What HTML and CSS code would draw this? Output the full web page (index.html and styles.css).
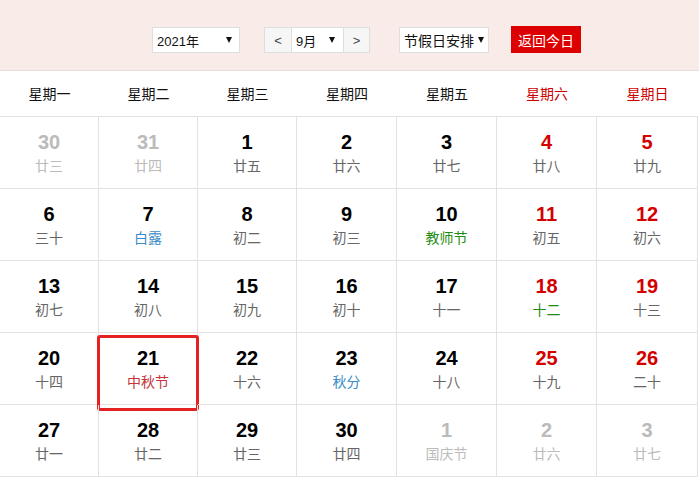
FILE: index.html
```html
<!DOCTYPE html>
<html lang="zh-CN">
<head>
<meta charset="utf-8">
<title>万年历</title>
<link rel="stylesheet" href="styles.css">
</head>
<body>
<div class="toolbar">
  <div class="sel sel-year"><span>2021年</span><i class="tri"></i></div>
  <div class="month-group">
    <div class="nav-btn">&lt;</div>
    <div class="sel sel-month"><span>9月</span><i class="tri"></i></div>
    <div class="nav-btn">&gt;</div>
  </div>
  <div class="sel sel-holiday"><span>节假日安排</span><i class="tri"></i></div>
  <div class="today-btn">返回今日</div>
</div>
<div class="weekhead">
  <div>星期一</div><div>星期二</div><div>星期三</div><div>星期四</div><div>星期五</div><div class="we">星期六</div><div class="we">星期日</div>
</div>
<div class="grid">
  <div class="cell out"><b>30</b><span>廿三</span></div>
  <div class="cell out"><b>31</b><span>廿四</span></div>
  <div class="cell"><b>1</b><span>廿五</span></div>
  <div class="cell"><b>2</b><span>廿六</span></div>
  <div class="cell"><b>3</b><span>廿七</span></div>
  <div class="cell we"><b>4</b><span>廿八</span></div>
  <div class="cell we"><b>5</b><span>廿九</span></div>

  <div class="cell"><b>6</b><span>三十</span></div>
  <div class="cell"><b>7</b><span class="blue">白露</span></div>
  <div class="cell"><b>8</b><span>初二</span></div>
  <div class="cell"><b>9</b><span>初三</span></div>
  <div class="cell"><b>10</b><span class="green">教师节</span></div>
  <div class="cell we"><b>11</b><span>初五</span></div>
  <div class="cell we"><b>12</b><span>初六</span></div>

  <div class="cell"><b>13</b><span>初七</span></div>
  <div class="cell"><b>14</b><span>初八</span></div>
  <div class="cell"><b>15</b><span>初九</span></div>
  <div class="cell"><b>16</b><span>初十</span></div>
  <div class="cell"><b>17</b><span>十一</span></div>
  <div class="cell we"><b>18</b><span class="green">十二</span></div>
  <div class="cell we"><b>19</b><span>十三</span></div>

  <div class="cell"><b>20</b><span>十四</span></div>
  <div class="cell today"><b>21</b><span class="red">中秋节</span></div>
  <div class="cell"><b>22</b><span>十六</span></div>
  <div class="cell"><b>23</b><span class="blue">秋分</span></div>
  <div class="cell"><b>24</b><span>十八</span></div>
  <div class="cell we"><b>25</b><span>十九</span></div>
  <div class="cell we"><b>26</b><span>二十</span></div>

  <div class="cell"><b>27</b><span>廿一</span></div>
  <div class="cell"><b>28</b><span>廿二</span></div>
  <div class="cell"><b>29</b><span>廿三</span></div>
  <div class="cell"><b>30</b><span>廿四</span></div>
  <div class="cell out"><b>1</b><span>国庆节</span></div>
  <div class="cell out"><b>2</b><span>廿六</span></div>
  <div class="cell out"><b>3</b><span>廿七</span></div>
</div>
</body>
</html>
```
FILE: styles.css
```css
*, *::before, *::after { box-sizing: border-box; }
html, body { margin: 0; padding: 0; background: #fff; }
body {
  font-family: "Liberation Sans", "Noto Sans CJK SC", sans-serif;
  color: #000;
  width: 699px;
  overflow: hidden;
}
.toolbar {
  height: 71px;
  background: #f9ece8;
  border-bottom: 1px solid #e6dcda;
  display: flex;
  align-items: flex-start;
  padding: 27px 0 0 152px;
}
.sel {
  height: 26px;
  background: #fff;
  border: 1px solid #dedede;
  display: flex;
  align-items: center;
  justify-content: space-between;
  font-size: 13px;
  color: #111;
  padding: 0 7px 0 4px;
}
.tri {
  width: 0; height: 0;
  border-left: 3px solid transparent;
  border-right: 3px solid transparent;
  border-top: 6px solid #111;
}
.sel-year { width: 88px; }
.month-group {
  display: flex;
  margin-left: 24px;
  height: 26px;
}
.nav-btn {
  width: 28px;
  height: 26px;
  background: #f6f6f6;
  border: 1px solid #dedede;
  display: flex;
  align-items: center;
  justify-content: center;
  font-size: 13px;
  color: #444;
}
.sel-month { width: 51px; border-left: none; border-right: none; padding: 0 8px 0 4px; }
.month-group .nav-btn:last-child { width: 27px; }
.sel-holiday { width: 90px; margin-left: 29px; font-size: 14px; padding: 0 4px 0 4px; white-space: nowrap; overflow: hidden; }
.sel-holiday .tri { flex: none; margin-left: 2px; }
.today-btn {
  margin-left: 22px;
  margin-top: -1px;
  width: 70px;
  height: 27px;
  background: #dd0000;
  color: #fff;
  font-size: 14px;
  display: flex;
  align-items: center;
  justify-content: center;
}
.weekhead {
  display: grid;
  grid-template-columns: 99px 99px 99px 100px 100px 100px 101px;
  width: 698px;
  height: 46px;
  border-bottom: 1px solid #e2e2e2;
  align-items: center;
  font-size: 14px;
  text-align: center;
  color: #111;
  padding-bottom: 1px;
}
.weekhead .we { color: #cc0000; }
.grid {
  display: grid;
  grid-template-columns: 99px 99px 99px 100px 100px 100px 101px;
  width: 698px;
}
.cell {
  height: 72px;
  border-right: 1px solid #e2e2e2;
  border-bottom: 1px solid #e2e2e2;
  display: flex;
  flex-direction: column;
  align-items: center;
  padding-top: 13px;
  position: relative;
}
.cell b {
  font-size: 20px;
  line-height: 24px;
  font-weight: bold;
  color: #000;
}
.cell span {
  margin-top: 2px;
  font-size: 14px;
  line-height: 20px;
  color: #666;
}
.cell.we b { color: #d40000; }
.cell.out b, .cell.out span { color: #bbb; }
.cell span.blue { color: #3a8cc6; }
.cell span.green { color: #1f8c12; }
.cell span.red { color: #c8333a; }
.cell.today::after {
  content: "";
  position: absolute;
  top: 2px;
  left: -2px;
  width: 102px;
  height: 76px;
  border: 3px solid #e52222;
  border-radius: 3px;
}
```
